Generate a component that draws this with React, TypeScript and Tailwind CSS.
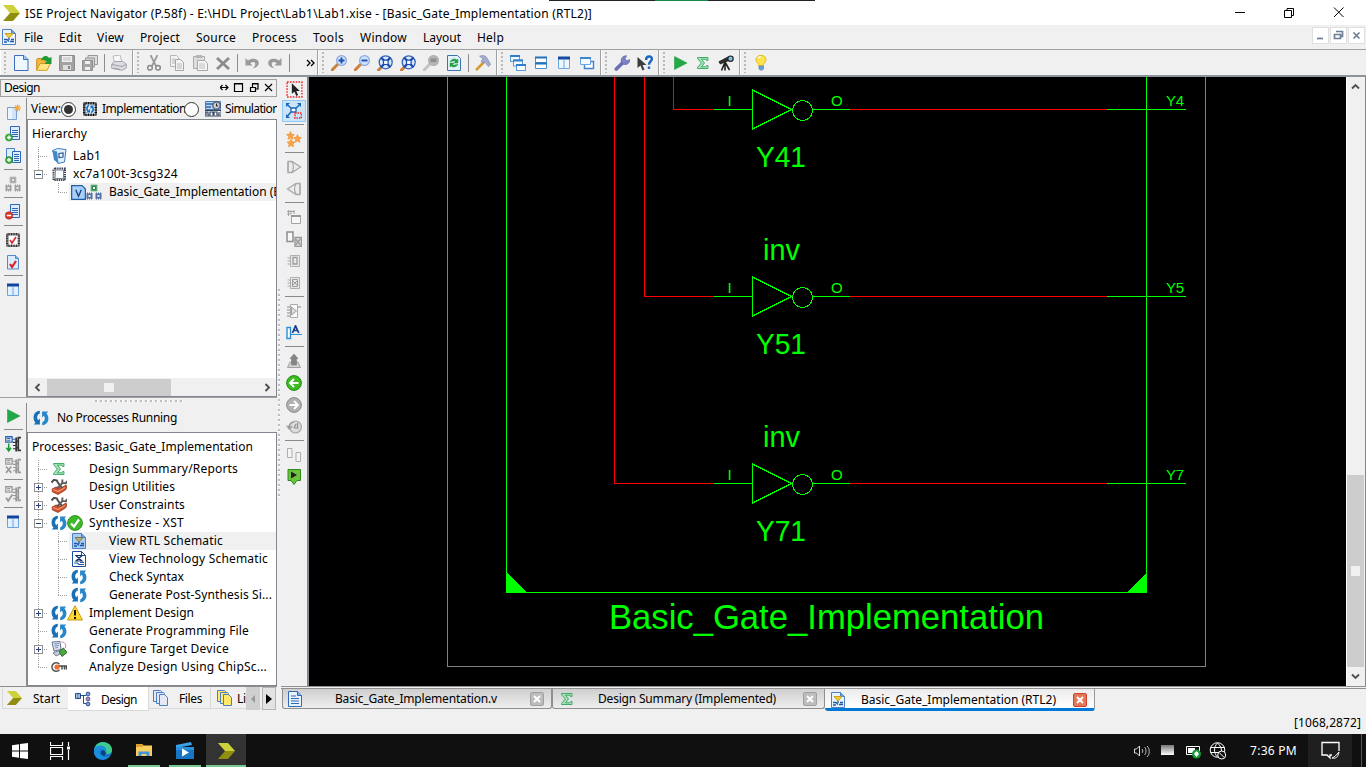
import React, { useLayoutEffect, useRef } from "react";

type P = { children?: React.ReactNode };

/* Text set to a given width by spreading or tightening its letters. */
function Label({ text, w, className = "" }: { text: string; w: number; className?: string }) {
  const ref = useRef<HTMLSpanElement>(null);
  useLayoutEffect(() => {
    const el = ref.current;
    if (!el) return;
    el.style.letterSpacing = "0px";
    const natural = el.getBoundingClientRect().width;
    el.style.letterSpacing = `${(w - natural) / text.length}px`;
  }, [text, w]);
  return (
    <span ref={ref} className={`inline-block shrink-0 whitespace-pre ${className}`}>
      {text}
    </span>
  );
}

function Ico({ children, s = 16 }: P & { s?: number }) {
  return (
    <svg width={s} height={s} viewBox="0 0 16 16" fill="none" className="shrink-0">
      {children}
    </svg>
  );
}

/* ---------- toolbar drawings ---------- */
const Logo = ({ s = 18 }: { s?: number }) => (
  <svg width={s} height={s} viewBox="0 0 18 18" className="shrink-0">
    <path d="M1 1h10l7 8H8z" fill="#cdd23c" />
    <path d="M8 9h10l-7 8H1z" fill="#8f8e10" />
  </svg>
);
const NewDoc = () => (
  <Ico><path d="M1.500.500h9.500l4 4v11H1.500z" fill="#eef6ff" stroke="#3c6fbf" /><path d="M10.500.500v4h4.500" fill="#9cc4f0" stroke="#3c6fbf" /></Ico>
);
const OpenFile = () => (
  <Ico>
    <path d="M.700 15V4.500l1-1h4l1 1.500h3v4" fill="#f3b73e" stroke="#c98a1e" />
    <path d="M.700 15.300L4 8.500h10.500L11 15.300z" fill="#ffe680" stroke="#d49b25" />
    <path d="M5 5.500C6 1 10.500-.5 13 3l2.500-1v7H8.500l2.300-2.300C9.500 4.500 7 4 5 5.500z" fill="#1d9a35" />
  </Ico>
);
const Save = () => (
  <Ico><path d="M.500.500h15v15h-15z" fill="#a2a2a2" stroke="#8c8c8c" /><path d="M3 1h10v6H3z" fill="#f2f2f2" /><path d="M4 3h8M4 5h8" stroke="#bbb" /><path d="M4 10h8v5H4z" fill="#ddd" /><path d="M9 11h2v3H9z" fill="#888" /></Ico>
);
const SaveAll = () => (
  <Ico>
    <path d="M6 .5h9.500v9H6z" fill="#ddd" stroke="#999" /><path d="M3.500 3h9v9h-9z" fill="#ccc" stroke="#999" />
    <path d="M.5 5.500h10v10H.5z" fill="#a5a5a5" stroke="#909090" /><path d="M3 6h5v3H3zM3 12h5v3H3z" fill="#eee" />
  </Ico>
);
const Print = () => (
  <Ico><path d="M3.500 8L2 1l7-1 2 7z" fill="#f7f7fa" stroke="#b8b8c2" /><path d="M.700 9l3-2.500h8l3.600 2.500v4l-4.300 2.300-10.300-2z" fill="#dcdce2" stroke="#a5a5af" /><path d="M1 9.500l10 2 4-2M3 13l6 1.500" stroke="#9d9da8" /></Ico>
);
const Cut = () => (
  <Ico><path d="M4.500 0l5.500 11M11.500 0L6 11" stroke="#989898" strokeWidth="1.700" /><circle cx="4" cy="12.800" r="2.300" stroke="#888" strokeWidth="1.500" /><circle cx="12" cy="12.800" r="2.300" stroke="#888" strokeWidth="1.500" /></Ico>
);
const Copy = () => (
  <Ico><path d="M1.500.5h6l2 2v9h-8z" fill="#f3f3f3" stroke="#b5b5b5" /><path d="M6.500 4.500h5l3 3v8h-8z" fill="#f3f3f3" stroke="#a5a5a5" /><path d="M3 4h3M3 6h3M3 8h3M8 9h5M8 11h5M8 13h5" stroke="#b8b8b8" /></Ico>
);
const Paste = () => (
  <Ico><path d="M1.500 1.500h11v12h-11z" fill="#dedede" stroke="#ababab" /><path d="M4 0h6v3H4z" fill="#b5b5b5" /><path d="M5.500 5.500h7l3 3v7h-10z" fill="#f5f5f5" stroke="#a8a8a8" /><path d="M7 9h6M7 11h6M7 13h6" stroke="#c0c0c0" /></Ico>
);
const Del = () => <Ico><path d="M2 3l12 11M14 3L2 14" stroke="#8b8b8b" strokeWidth="2.800" /></Ico>;
const Undo = () => <Ico><path d="M1.500 3v7.500h7L6.300 8.200c2.700-2 5-1.200 5 .8 0 1.500-1 3-3 4.500 4.500-.8 6.500-3 6.500-5.700C14.800 3.600 8 2.300 4 5.600z" fill="#9a9a9a" /></Ico>;
const Redo = () => <Ico><path d="M14.500 3v7.500h-7l2.200-2.300c-2.700-2-5-1.200-5 .8 0 1.500 1 3 3 4.500-4.500-.8-6.500-3-6.500-5.700C1.200 3.600 8 2.300 12 5.600z" fill="#9a9a9a" /></Ico>;

function Lens({ c = "#3c6fd0", fill = "#cfe2fb", handle = "#c98236", children }: P & { c?: string; fill?: string; handle?: string }) {
  return (
    <Ico>
      <path d="M1 15l5.500-5.500" stroke={handle} strokeWidth="3" strokeLinecap="round" />
      <circle cx="10.500" cy="5.500" r="4.900" fill={fill} stroke={c} strokeWidth="1.200" />
      {children}
    </Ico>
  );
}
const ZoomIn = () => <Lens c="#8fa9dc"><path d="M10.500 2.500v6M7.500 5.500h6" stroke="#1e4fb4" strokeWidth="1.900" /></Lens>;
const ZoomOut = () => <Lens c="#8fa9dc"><path d="M7.500 5.500h6" stroke="#1e4fb4" strokeWidth="1.900" /></Lens>;
const ZoomFit = () => (
  <Ico>
    <path d="M1.500 15l4-4" stroke="#c98236" strokeWidth="3" strokeLinecap="round" />
    <circle cx="8.700" cy="7.300" r="6.500" fill="#d9e8fb" stroke="#3563bd" strokeWidth="1.300" />
    <path d="M4 2.500l3 3M13.500 2.500l-3 3M13.500 12.300l-3-3M4 12.300l3-3" stroke="#1d4bab" strokeWidth="2.300" /><path d="M6.500 5.200h4.600v4.300H6.500z" fill="#f2f8ff" stroke="#1d4bab" strokeWidth="1.200" />
  </Ico>
);
const ZoomGray = () => <Lens c="#b0b0b0" fill="#b5b5b5" handle="#c4c4c4"><path d="M7.500 3.500h6v3.500h-6z" fill="#8f8f8f" /></Lens>;
const Refresh = () => (
  <Ico>
    <path d="M1.500.5h10l3 3v12h-13z" fill="#e3f1fb" stroke="#3676ad" />
    <path d="M4 7c1-3 5-4 7-2l1-1v4H8l1.500-1.500C8 5.500 6 6 4 7zM12 9c-1 3-5 4-7 2l-1 1V8h4L6.500 9.500C8 10.500 10 10 12 9z" fill="#25a045" stroke="#25a045" strokeWidth=".5" />
  </Ico>
);
const Hammer = () => <Ico><path d="M1 15.200l8-8.200" stroke="#d69a2e" strokeWidth="2.600" /><path d="M4.500 1.200c4-1.500 6.500-.2 7.500 1.800l3.700 6.500-2.200 2L10 7.300 7.300 8 6 6l2.200-2z" fill="#a3abcf" stroke="#7b84ad" strokeWidth=".6" /></Ico>;
const Cascade = () => (
  <Ico>{[[0, 0], [3, 4.5], [6, 9]].map(([x, y]) => (<g key={x}><rect x={x + 0.5} y={y + 0.5} width="9" height="6" fill="#f5faff" stroke="#5b9bd8" /><path d={`M${x} ${y + 1}h10`} stroke="#2f7fcc" strokeWidth="2" /></g>))}</Ico>
);
const TileH = () => <Ico><path d="M2.500 2.500h11v5h-11zM2.500 8.500h11v5h-11z" fill="#fff" stroke="#4a90d2" /><path d="M2 2.500h12M2 8.500h12" stroke="#2272be" strokeWidth="1.800" /></Ico>;
const TileV = () => <Ico><path d="M2.500 2.500h11v11h-11z" fill="#eef6ff" stroke="#6ca8df" /><path d="M2 3h12" stroke="#174a9c" strokeWidth="3" /><path d="M8 4v9" stroke="#6ca8df" /></Ico>;
const Float = () => <Ico><path d="M5.500 6.500h9v7h-9z" fill="#fff" stroke="#3d86cb" strokeWidth="1.400" /><path d="M1.500 2.500h10v7h-10z" fill="#f5faff" stroke="#6ca8df" /><path d="M1 3h11" stroke="#3d86cb" strokeWidth="2" /></Ico>;
const Wrench = () => <Ico><path d="M2.300 14l6.700-6.500" stroke="#6a6fb5" strokeWidth="3.600" strokeLinecap="round" /><path d="M7.500 7.500c-1.200-3.500 1-7 5-6.700l-1.500 3 2 2 2.700-1.300c.3 3.700-3 5.700-6 4.800z" fill="#7d82c6" stroke="#5c61a6" strokeWidth=".7" /></Ico>;
const WhatsThis = () => <Ico><path d="M.500 2v11l3-2.500 2 5 2-1-2-4.500h4z" fill="#3b3b3b" /><path d="M9 5C9 .2 15.800.5 14.700 4.700c-.5 1.800-2.700 2-2.700 5" stroke="#1a66c0" strokeWidth="2.400" /><path d="M10.800 11.500h2.400v2.400h-2.400z" fill="#1a66c0" /></Ico>;
const Play = () => <Ico><path d="M2.500 1.500v13L15 8z" fill="#22a845" stroke="#2c9b45" strokeWidth=".6" /></Ico>;
const Sigma = () => <Ico><path d="M2.500 2.500h10.500v3h-1.300l-.7-1.300H6.500L9.500 8l-3 3.800h4.300l.9-1.300H13v3H2.500v-1L6.300 8 2.500 3.500z" fill="#a3e3b8" stroke="#259c50" strokeWidth=".8" /></Ico>;
const Telescope = () => <Ico><path d="M.500 6.500l9.500-5 2 4-10 4z" fill="#2b2b2b" /><circle cx="12.500" cy="3.700" r="2.700" fill="#7cc3e8" stroke="#222" strokeWidth="1.200" /><path d="M7 7l-3.500 8.500M7 7v8.500M7 7l4.500 8" stroke="#222" strokeWidth="1.600" /></Ico>;
const Bulb = () => <Ico><path d="M8 .5c6 0 6 5.500 3 8-.6.7-.8 1.500-.8 2.500H5.800c0-1-.2-1.800-.8-2.500-3-2.500-3-8 3-8z" fill="#ffe34a" stroke="#e5b620" /><path d="M5 3c1-1 2-1.300 3-1" stroke="#fff" strokeWidth="1.300" /><path d="M6 11h4.500v3L8.200 15.500 6 14z" fill="#6aa2d8" stroke="#3f7ab5" strokeWidth=".6" /></Ico>;

/* ---------- side drawings ---------- */
const lines = "M7 4.500h6M7 6.500h6M7 8.500h6M7 10.500h6";
const NewSource = () => <Ico><path d="M2.500 3.500h9v12h-9z" fill="#cfe4fa" stroke="#7ba0d0" /><path d="M3 4h4v11H3z" fill="#eaf4ff" /><path d="M12.500.5v7M9 4h7M10 1.500l5 5M15 1.500l-5 5" stroke="#f0a93a" strokeWidth="1.100" /></Ico>;
const AddSource = () => <Ico><path d="M5.500.5h9v13h-9z" fill="#ddedff" stroke="#2d68b5" /><path d={lines} stroke="#2d68b5" /><circle cx="4" cy="11.500" r="3.500" fill="#3fae3a" stroke="#1f7f22" strokeWidth=".6" /><path d="M4 9.500v4M2 11.500h4" stroke="#fff" strokeWidth="1.300" /></Ico>;
const AddCopy = () => <Ico><path d="M1.500.5h8v12h-8z" fill="#ddedff" stroke="#4b83c8" /><path d="M7.500 3.500h8v11h-8z" fill="#ddedff" stroke="#2d68b5" /><path d="M9 6.500h5M9 8.500h5M9 10.500h5M9 12.500h5" stroke="#2d68b5" /><circle cx="4" cy="12" r="3.500" fill="#3fae3a" stroke="#1f7f22" strokeWidth=".6" /><path d="M4 10v4M2 12h4" stroke="#fff" strokeWidth="1.300" /></Ico>;
const RemoveDoc = () => <Ico><path d="M5.500.5h9v13h-9z" fill="#ddedff" stroke="#2d68b5" /><path d={lines} stroke="#2d68b5" /><circle cx="4" cy="11.500" r="3.700" fill="#e03a2c" stroke="#a3170e" strokeWidth=".6" /><path d="M1.800 11.500h4.400" stroke="#fff" strokeWidth="1.500" /></Ico>;
function Chips({ top, low }: { top: string; low: string }) {
  const chip = (x: number, y: number, c: string) => (
    <g key={`${x}-${y}`}>
      <path d={`M${x} ${y + 1.500}h7M${x} ${y + 3.500}h7M${x} ${y + 5.500}h7M${x + 1.500} ${y}v7M${x + 3.500} ${y}v7M${x + 5.500} ${y}v7`} stroke={c} />
      <rect x={x + 2} y={y + 2} width="3" height="3" fill="#e8f2ea" stroke={c} />
    </g>
  );
  return <Ico>{chip(4.5, 0.5, top)}{chip(0, 8.5, low)}{chip(9, 8.5, low)}</Ico>;
}
function Chip({ c = "#444", fill = "#fff", children }: P & { c?: string; fill?: string }) {
  return (
    <Ico>
      <path d="M4 1v14M6.500 1v14M9 1v14M11.500 1v14M1 4h14M1 6.500h14M1 9h14M1 11.500h14M2 2h12v12H2z" stroke={c} strokeWidth="1.200" />
      <rect x="3.500" y="3.500" width="9" height="9" fill={fill} />
      {children}
    </Ico>
  );
}
const ChipCheck = () => <Chip c="#333"><path d="M5 8l2 3 4-6" stroke="#dd2a2a" strokeWidth="1.600" /></Chip>;
const ChipPlain = () => (
  <Ico><path d="M4 2.500h10v11.500H2.500V4z" stroke="#39424f" strokeWidth="2" strokeDasharray="1.400 .8" /><path d="M4.500 4h8v8.500H4z" fill="#fafcff" stroke="#5a6574" strokeWidth=".8" /></Ico>
);
const ChipCycle = () => <Chip c="#101010" fill="#d6ebfc"><path d="M7 4.500C4.500 5 4.500 8.500 6 10M9 11.500c2.500-.8 2.800-4 1.200-6" stroke="#1c6fbd" strokeWidth="1.700" /><path d="M4 11.500h4v-3.500zM12 4.500H8.500V8z" fill="#1c6fbd" /></Chip>;
const DocCheck = () => <Ico><path d="M2.500 1.500h8l3 3v10.500h-11z" fill="#dcecff" stroke="#5389c9" /><path d="M10.500 1.500v3h3" fill="#87b3e6" stroke="#5389c9" /><path d="M5 10l2 3 4-6" stroke="#e0202a" strokeWidth="2.200" /></Ico>;
const Columns = () => <Ico><path d="M2.500 3h11v10.500h-11z" fill="#e3f0ff" stroke="#6ba3e0" /><path d="M2 3h12" stroke="#0f459c" strokeWidth="3" /><path d="M8 4.500v9" stroke="#6ba3e0" /></Ico>;
function ChipFlow({ c, mark, g }: { c: string; mark: "down" | "x" | "check"; g: string }) {
  return (
    <Ico s={17}>
      <path d="M.7.7h6v5h-6z" stroke={g} strokeWidth="1.200" /><path d="M2 2.300h3M2 4h3M7 3h3" stroke={g} />
      <path d="M10.500 1.500v13M15 1.500h-2.500v12H15M10 5h2M10 11h2" stroke={c} strokeWidth="1.600" /><path d="M7.500 6h3M7.500 9h3M7.500 12h3" stroke={c} />
      {mark === "down" && <path d="M3.500 7v6M1.300 11l2.200 3 2.200-3" stroke="#159b35" strokeWidth="1.400" />}
      {mark === "x" && <path d="M1 8l5 6M6 8l-5 6" stroke="#999" strokeWidth="1.500" />}
      {mark === "check" && <path d="M1 11l2 3 4-6" stroke="#999" strokeWidth="1.700" />}
    </Ico>
  );
}
const half = "M6.800.8C2.500 1 .3 4.500.6 8c.1 2 .8 3.500 1.900 4.600L.8 14.500h6.100V8.400L5.200 10.200C3.600 8.300 3.700 5 6.800 3.600z";
const Cycle = () => (
  <Ico><path d={half} fill="#1a70b4" /><path d={half} fill="#2787c9" transform="rotate(180 8 8)" /></Ico>
);
const Ok = () => <Ico><circle cx="8" cy="8" r="7.400" fill="#3fb929" stroke="#2b931a" /><path d="M4 8.500l3 3 5-7" stroke="#fff" strokeWidth="2.200" /></Ico>;
const Warn = () => <Ico><path d="M8 .8L15.500 15H.5z" fill="#ffd92e" stroke="#c29a16" /><path d="M8 5v5.500" stroke="#111" strokeWidth="2" /><path d="M7 12h2v2H7z" fill="#111" /></Ico>;
const Tools = () => (
  <Ico>
    <path d="M1 10l4-2 5 1 5-3 1 2-1.500 3L7 15.500 1.500 13z" fill="#d2512a" stroke="#8e2f14" strokeWidth=".7" /><path d="M2 10.500l5 2 7-4" stroke="#f0987a" strokeWidth="1.300" />
    <path d="M.5 3.500L3 .8l3 .7.5 1.500L11 9" stroke="#4e4e4e" strokeWidth="2" /><path d="M6 9.500l6-6M11.500.5l-.3 3.500 3.800.3 1-2.300" stroke="#5d5d5d" strokeWidth="1.900" />
  </Ico>
);
function Schematic({ gold = true, bg = "#e9f4ff" }: { gold?: boolean; bg?: string }) {
  return (
    <Ico><path d="M1.500.5h9l4 4v11h-13z" fill={bg} stroke="#4c80c4" /><path d="M10.500.5v4h4" fill="#6f9fd8" stroke="#4c80c4" /><path d="M4 4.500h8L8 9z" fill={gold ? "#f1cd3a" : "#b3b184"} stroke={gold ? "#c9a020" : "#77784e"} /><path d="M8 9v2M3 10.500h3l2 2M3 13h3M9 12.500h4M10 10.500h3" stroke="#2458a6" strokeWidth="1.300" /></Ico>
  );
}
const TechSchematic = () => (
  <Ico><path d="M1.500.5h9l4 4v11h-13z" fill="#fff" stroke="#1d4fa0" /><path d="M10.500.5v4h4" stroke="#1d4fa0" /><path d="M5 4.500h6L5 10h6L5 4.500z" fill="#fff" stroke="#12336f" strokeWidth="1.200" /><path d="M3 12h3.500l1.500 1.500h5M9 11.500h4" stroke="#2458a6" strokeWidth="1.200" /></Ico>
);
const Configure = () => <Ico><path d="M1 1l8-.5 1 8-7 1.500z" fill="#dfe6f2" stroke="#66738f" /><path d="M3 3l5-.5M3.500 5l4.500-.5M4 7l3-.5" stroke="#7990b8" /><path d="M2 12l6-2.500 3 2.500-6 3z" fill="#c4cbd8" stroke="#7684a0" /><path d="M8 10.500l4.500-3.500 3.500 4.500-5 4z" fill="#49a83e" stroke="#2c5e25" strokeWidth=".9" /><path d="M10.500 1c3 0 5 2 4 6" stroke="#d86f9a" /></Ico>;
const Probe = () => <Ico><path d="M8.500 5.200A4.300 4.300 0 1 0 8.500 10.800" stroke="#555" strokeWidth="1.500" /><circle cx="6" cy="8" r="2.600" fill="#ee6f35" /><path d="M8 7h8M11 7v3.500M13.500 7v3.500M15.500 7v3.500" stroke="#4c4c4c" strokeWidth="1.500" /></Ico>;
const ProjectIcon = () => <Ico><path d="M1.500 2.500l5-2 8.500 1L13.500 14 7 15.500z" fill="#e2f0fd" stroke="#3c7bb8" /><path d="M1.500 2.500l4.500 1 1.500 12L3 12z" fill="#3c88c9" /><path d="M8 5.500l4-.5v4l-4 .5z" fill="#fff" stroke="#27548d" strokeWidth="1.200" /></Ico>;
const VFile = () => <Ico s={15}><path d="M.700.700h11l3.600 3.600v11H.700z" fill="#a9d1f8" stroke="#1c5ca8" strokeWidth="1.300" /><path d="M5 5l3 7 3-7" stroke="#1a3f88" strokeWidth="1.400" /></Ico>;
const SimIcon = () => <Ico><path d="M.5.5h15v8H.5z" fill="#b6d2f0" stroke="#4a79b5" /><path d="M1 3h7M1 6h5" stroke="#2f68ac" strokeWidth="1.400" /><circle cx="11.500" cy="4.500" r="3.700" fill="#c7ccd2" stroke="#4c5560" strokeWidth="1.200" /><path d="M11.500 2.500V5H13" stroke="#222" /><path d="M0 9.500h16V15H0z" fill="#fff" stroke="#30435e" /><path d="M1 14v-3h2v3h2v-3h3v3h1v-3h3v3h2v-3" stroke="#30435e" strokeWidth="1.200" /></Ico>;

const Select = () => <Ico s={17}><path d="M1 1h14v14H1z" stroke="#e22" strokeWidth="1.300" strokeDasharray="1.500 1.200" /><path d="M5.500 2v10l2.500-2 1.700 4 1.700-.8-1.700-3.700h3.300z" fill="#222" /></Ico>;
const ZoomFull = () => <Ico><path d="M5 5h5v4H5z" fill="#fff" stroke="#1b66b8" strokeWidth="1.300" /><path d="M5 5L1.500 2M10 5l3.500-3M5 9l-3.500 4" stroke="#1b66b8" strokeWidth="1.500" /><path d="M0 0h4L0 4zM15 0h-4l4 4zM0 15h4l-4-4z" fill="#1b66b8" /><path d="M9 10h6.500v5H9z" stroke="#e22" strokeWidth="1.500" strokeDasharray="1.500 1" /></Ico>;
const star = "M0-4l1.200 2.600 2.800.4-2 2 .5 2.900L0 2.500l-2.500 1.400.5-2.900-2-2 2.800-.4z";
const Stars = () => <Ico><g fill="#f7a24a" stroke="#ec8a28" strokeWidth=".5"><path d={star} transform="translate(4.500 4.500)" /><path d={star} transform="translate(11.500 7.500)" /><path d={star} transform="translate(5 12)" /></g></Ico>;
const Cone = ({ flip = false }: { flip?: boolean }) => (
  <Ico><g transform={flip ? "translate(16 0) scale(-1 1)" : undefined}><path d="M2 2.500h4L14.500 8 6 13.500H2z" fill="#ececec" stroke="#a9a9a9" strokeWidth="1.300" /><path d="M6 3c1.800 3 1.800 7 0 10M2 3v10" stroke="#a9a9a9" strokeWidth="1.200" /></g></Ico>
);
const GWin = () => <Ico><path d="M5.500 6.500h9v8h-9z" fill="#f6f6f6" stroke="#a4a4a4" /><path d="M5 7h10" stroke="#999" strokeWidth="2" /><path d="M1 2.500h8M1 5h4M2.500 1v6M5 1v4M8 1v4" stroke="#a4a4a4" /></Ico>;
const GSwap = () => <Ico><path d="M1 1h6v9.500H1z" fill="#f7f7f7" stroke="#8e8e8e" strokeWidth="1.500" /><path d="M9 6.500h6.500v9H9z" fill="#ddd" stroke="#999" strokeWidth="1.300" /><path d="M9.500 8l5 6M14.500 8l-5 6" stroke="#999" strokeWidth="1.300" /></Ico>;
const GChip = ({ x = false }: { x?: boolean }) => <Ico><path d="M4.500 2.500h9v11h-9z" fill="#e8e8e8" stroke="#b0b0b0" /><path d="M1.500 5h3M1.500 8h3M1.500 11h3" stroke="#aaa" />{x ? <path d="M7 6l4 4M11 6l-4 4M6.500 4.500h5v7h-5z" stroke="#9c9c9c" /> : <path d="M7 4.500h4v6.500H7z" stroke="#9c9c9c" strokeWidth="1.300" />}</Ico>;
const GGate = () => <Ico><path d="M4.500 1.500h7v13h-7z" fill="#fafafa" stroke="#aaa" /><path d="M5.500 4v8L10.500 8z" fill="#ddd" stroke="#a0a0a0" /><path d="M1 4h3M1 7h3M1 10h3M1 13h3M12 4h3" stroke="#aaa" strokeWidth="1.300" /></Ico>;
const Rename = () => <Ico><path d="M1 2.500h3.500v11H1z" fill="#fff" stroke="#2a8fd4" strokeWidth="1.400" /><path d="M5 9.500h11" stroke="#2a8fd4" /><path d="M6.500 8L9.500.8 12.800 8M7.800 5.500h4" stroke="#1b3c90" strokeWidth="1.700" /></Ico>;
const Push = () => <Ico><path d="M1.500 14.500L4 9h8l2.500 5.500z" fill="#d2d2d2" stroke="#a2a2a2" /><path d="M8 1l4 4.500-1.500.5V12h-5V6L4 5.500z" fill="#858585" stroke="#777" strokeWidth=".5" /></Ico>;
const Nav = ({ dir }: { dir: "l" | "r" }) => (
  <Ico><circle cx="8" cy="8" r="7.400" fill={dir === "l" ? "#3dbb22" : "#b0b0b0"} stroke={dir === "l" ? "#218c12" : "#8c8c8c"} /><path d={dir === "l" ? "M12.500 8H4M8 4L4 8l4 4" : "M3.500 8H12M8 4l4 4-4 4"} stroke="#fff" strokeWidth="1.900" /></Ico>
);
const History = () => <Ico><circle cx="9.500" cy="8" r="5.900" fill="#dcdcdc" stroke="#aeaeae" strokeWidth="1.300" /><path d="M0 6.500l3 4.500 4-3.500z" fill="#9f9f9f" /><path d="M3 8c0-3 2-4.500 4.500-4.500M11.500 4v4.500M8 9h4.500M8 9l2-4" stroke="#939393" strokeWidth="1.200" /></Ico>;
const TwoBox = () => <Ico><path d="M1.500 1.500h4.500v9H1.500zM10 5.500h4.500v9H10z" fill="#f4f4f4" stroke="#adadad" /></Ico>;
const MarkGo = () => <Ico><path d="M2 .5h12.500v11H11l-3 4-3-4H2z" fill="#6cc43e" stroke="#2d8a1d" /><path d="M5 2.500l6 3.500-6 3.500z" fill="#222" /></Ico>;
const TextDoc = () => <Ico><path d="M1.500.5h9l4 4v11h-13z" fill="#e7f2ff" stroke="#3469b4" /><path d="M10.500.5v4h4" fill="#8bb2e2" stroke="#3469b4" /><path d="M4 5h5M4 7.500h8M4 10h8M4 12.500h8" stroke="#3469b4" strokeWidth="1.200" /></Ico>;
const HierTab = () => <Ico><path d="M.5 2.500h5v5h-5z" fill="#dcebfb" stroke="#234d8c" /><path d="M1.500 4h3M1.500 6h3M5.500 4.500H11M8.500 4.500v8H11" stroke="#234d8c" /><circle cx="13" cy="3" r="1.900" fill="#75a9df" stroke="#3d4f8c" /><circle cx="13" cy="8" r="1.900" fill="#b58fc9" stroke="#59518c" /><circle cx="13" cy="13" r="1.900" fill="#75a9df" stroke="#3d4f8c" /></Ico>;
const Pages = ({ f }: { f: string }) => <Ico><path d="M.5.5h7l1 1v10h-8z" fill={f} stroke="#4a7fc4" /><path d="M3.500 2.500h7l1 1v10h-8z" fill={f} stroke="#4a7fc4" /><path d="M6.500 4.500h5l3 3v8h-8z" fill={f} stroke="#4a7fc4" /></Ico>;

/* ---------- building blocks ---------- */
const Cell = ({ children }: P) => <div className="flex h-6 w-[23px] shrink-0 items-center justify-center">{children}</div>;
const VSep = () => <div className="mx-[2.5px] h-[18px] w-px shrink-0 bg-[#8c8c8c]" />;
function Group({ w, children }: P & { w: string }) {
  return (
    <div className={`flex h-[25px] shrink-0 items-center border-l border-l-white ${w}`}>
      <div className="mr-[3px] ml-[3px] h-[21px] w-[2px] shrink-0 bg-[repeating-linear-gradient(#b9b9b9_0_2px,transparent_2px_4px)]" />
      {children}
    </div>
  );
}
function Rail({ items, w }: { items: (React.ReactNode | null)[]; w: string }) {
  return (
    <div className={`flex flex-col items-center ${w}`}>
      {items.map((it, i) =>
        it === null ? (
          <div key={i} className="flex h-[6px] w-full shrink-0 justify-center pt-[2px]"><div className="h-px w-[19px] bg-[#8a8a8a]" /></div>
        ) : (
          <div key={i} className="flex h-[22px] w-full shrink-0 items-center justify-center">{it}</div>
        )
      )}
    </div>
  );
}

type RowT = { lvl: 1 | 2; exp?: "+" | "-"; icon: React.ReactNode; text: string; w: number; sel?: boolean; tx: string; last?: boolean; alone?: boolean; end?: boolean };
const dotV = "bg-[repeating-linear-gradient(#a0a0a0_0_1px,transparent_1px_2px)]";
const dotH = "bg-[repeating-linear-gradient(90deg,#a0a0a0_0_1px,transparent_1px_2px)]";
function TreeRow({ r }: { r: RowT }) {
  return (
    <div className="flex h-[18px] w-full shrink-0 overflow-hidden">
      <div className="flex h-[18px] w-[20px] shrink-0 justify-end">
        <div className="relative h-[18px] w-[10px]">
          {!r.alone && <div className={`absolute top-0 left-0 w-px ${dotV} ${r.last ? "h-[9px]" : "h-[18px]"}`} />}
          {r.lvl === 1 && <div className={`absolute top-[9px] left-0 h-px w-[10px] ${dotH}`} />}
          {r.exp && (
            <div className="absolute top-[5px] left-[-4px] flex h-[9px] w-[9px] items-center justify-center border border-[#919191] bg-white">
              <div className="absolute h-px w-[5px] bg-[#24407a]" />
              {r.exp === "+" && <div className="absolute h-[5px] w-px bg-[#24407a]" />}
            </div>
          )}
        </div>
      </div>
      {r.lvl === 2 && (
        <div className="relative ml-[10px] h-[18px] w-[11px] shrink-0">
          <div className={`absolute top-0 left-0 w-px ${dotV} ${r.end ? "h-[9px]" : "h-[18px]"}`} />
          <div className={`absolute top-[9px] left-0 h-px w-[10px] ${dotH}`} />
        </div>
      )}
      <div className={`flex h-[18px] flex-1 items-center ${r.sel ? "bg-[#f0f0f0]" : ""}`}>
        <div className={`flex shrink-0 items-center pl-[3px] ${r.tx}`}>{r.icon}</div>
        <Label text={r.text} w={r.w} />
      </div>
    </div>
  );
}

const procs: RowT[] = [
  { lvl: 1, icon: <Sigma />, text: "Design Summary/Reports", w: 149, tx: "w-[41px]" },
  { lvl: 1, exp: "+", icon: <Tools />, text: "Design Utilities", w: 86, tx: "w-[41px]" },
  { lvl: 1, exp: "+", icon: <Tools />, text: "User Constraints", w: 96, tx: "w-[41px]" },
  { lvl: 1, exp: "-", icon: <><Cycle /><Ok /></>, text: "Synthesize - XST", w: 95, tx: "w-[41px]" },
  { lvl: 2, icon: <Schematic gold={false} bg="#a9cdf2" />, text: "View RTL Schematic", w: 114, sel: true, tx: "w-[40px] -ml-px pl-[2px] mr-px" },
  { lvl: 2, icon: <TechSchematic />, text: "View Technology Schematic", w: 159, tx: "w-[40px] -ml-px mr-px" },
  { lvl: 2, icon: <Cycle />, text: "Check Syntax", w: 75, tx: "w-[40px] -ml-px mr-px" },
  { lvl: 2, icon: <Cycle />, text: "Generate Post-Synthesis Si...", w: 163, tx: "w-[40px] -ml-px mr-px", end: true },
  { lvl: 1, exp: "+", icon: <><Cycle /><Warn /></>, text: "Implement Design", w: 105, tx: "w-[41px]" },
  { lvl: 1, icon: <Cycle />, text: "Generate Programming File", w: 160, tx: "w-[41px]" },
  { lvl: 1, exp: "+", icon: <Configure />, text: "Configure Target Device", w: 140, tx: "w-[41px]" },
  { lvl: 1, icon: <Probe />, text: "Analyze Design Using ChipSc...", w: 178, tx: "w-[41px]", last: true },
];
const hier: RowT[] = [
  { lvl: 1, icon: <ProjectIcon />, text: "Lab1", w: 28, tx: "w-[25px]" },
  { lvl: 1, exp: "-", icon: <ChipPlain />, text: "xc7a100t-3csg324", w: 105, tx: "w-[25px]", last: true },
  { lvl: 2, icon: <><VFile /><Chips top="#2a8c4a" low="#5470a8" /></>, text: "Basic_Gate_Implementation (E", w: 171, sel: true, alone: true, end: true, tx: "w-[40px] -ml-px mr-px" },
];

const Radio = ({ on = false }: { on?: boolean }) => (
  <div className="flex h-[15px] w-[15px] shrink-0 items-center justify-center rounded-full border border-[#333] bg-white">
    {on && <div className="h-[9px] w-[9px] rounded-full bg-[#333]" />}
  </div>
);

const G = "#00ff00";
function Gate({ y, name, port, x, inv = true }: { y: number; name: string; port: string; x: number; inv?: boolean }) {
  const m = y + 0.5;
  return (
    <g>
      <path d={`M${x + 0.5} 77V${m}H714`} stroke="#ff0000" />
      <path d={`M850 ${m}H1107`} stroke="#ff0000" />
      <path d={`M714 ${m}h38M812 ${m}h38M1107 ${m}h79`} stroke={G} />
      <path d={`M752.500 ${y - 19}v39L791.500 ${m}z`} stroke={G} />
      <circle cx="802.500" cy={y + 1.5} r="10" stroke={G} />
      <g fill={G} stroke="none">
        <text x="727.500" y={y - 3} fontSize="15">I</text>
        <text x="831" y={y - 3} fontSize="15">O</text>
        <text x="1166" y={y - 3} fontSize="15" textLength="18">{port}</text>
        {inv && <text x="763" y={y - 36} fontSize="30" textLength="37" lengthAdjust="spacingAndGlyphs">inv</text>}
        <text x="756" y={y + 57.5} fontSize="30" textLength="50" lengthAdjust="spacingAndGlyphs">{name}</text>
      </g>
    </g>
  );
}

function DocTab({ icon, text, w, cls, pad, active = false }: { icon: React.ReactNode; text: string; w: number; cls: string; pad: string; active?: boolean }) {
  return (
    <div className={`flex shrink-0 items-center rounded-b-[3px] ${cls} ${active ? "h-[22px] border-r border-b-[3px] border-r-[#999] border-b-[#0078d7] bg-gradient-to-b from-[#ececec] to-white pt-[2px]" : "h-[20px] border-r border-b border-l border-[#8f8f8f] bg-gradient-to-b from-[#cfcfcf] to-[#eee]"}`}>
      <div className={`flex shrink-0 ${pad}`}>{icon}</div>
      <Label text={text} w={w} />
      <div className={`mr-[7px] ml-auto flex h-[14px] w-[14px] shrink-0 items-center justify-center rounded-[2px] border ${active ? "border-[#d5402b] bg-[#e0795a]" : "border-[#a0a0a0] bg-[#bdbdbd]"}`}>
        <svg width="8" height="8" viewBox="0 0 8 8"><path d="M1 1l6 6M7 1L1 7" stroke="#fff" strokeWidth="2" /></svg>
      </div>
    </div>
  );
}

const menus: [string, number, string][] = [
  ["File", 19, "mr-[16px]"], ["Edit", 23, "mr-[15px]"], ["View", 27, "mr-[16px]"], ["Project", 40, "mr-[16px]"],
  ["Source", 40, "mr-[16px]"], ["Process", 45, "mr-[16px]"], ["Tools", 31, "mr-[16px]"], ["Window", 47, "mr-[16px]"],
  ["Layout", 38, "mr-[16px]"], ["Help", 27, ""],
];

export default function App() {
  return (
    <div className="flex h-[767px] w-[1366px] flex-col overflow-hidden bg-[#f0f0f0] text-[12px] leading-[18px] text-black [font-family:'Noto_Sans',sans-serif]">
      {/* title bar */}
      <div className="relative flex h-[25px] shrink-0 items-center bg-white pl-[2px]">
        <div className="absolute top-0 left-[549px] flex h-px w-[266px] bg-[#222]"><div className="ml-[106px] h-px w-[53px] bg-[#178a48]" /></div>
        <Logo />
        <Label className="ml-[5px] pt-[2px]" text={"ISE Project Navigator (P.58f) - E:\\HDL Project\\Lab1\\Lab1.xise - [Basic_Gate_Implementation (RTL2)]"} w={567} />
        <svg className="mr-[20px] mb-[2px] ml-auto" width="112" height="12" viewBox="0 0 112 12" fill="none" stroke="#000">
          <path d="M1 6.500h10M50.500 4.500h7v7h-7zM53 4V2.500h6.500v7H58M100 1.500l9.500 9.500M109.500 1.500L100 11" />
        </svg>
      </div>

      {/* menu bar */}
      <div className="flex h-[24px] shrink-0 items-center pl-px">
        <Schematic />
        <div className="ml-[7px] flex items-center pt-[2px]">
          {menus.map(([t, w, m]) => <Label key={t} text={t} w={w} className={m} />)}
        </div>
        <div className="mr-px mb-[3px] ml-auto flex gap-px">
          {["M5 11.500h6", "M6.500 4.500h6v5h-2M4.500 7.500h6v4h-6zM4 7.500h7M6 4.500h7", "M5.500 5.500l6 6M11.500 5.500l-6 6"].map((d) => (
            <div key={d} className="h-[17px] w-[17px] border border-[#e0e0e0] bg-white"><svg width="16" height="16" viewBox="1 1 16 16" fill="none"><path d={d} stroke="#6f7f93" strokeWidth="1.700" /></svg></div>
          ))}
        </div>
      </div>

      {/* tool bars */}
      <div className="flex h-[28px] shrink-0 border-t border-b-2 border-t-[#a0a0a0] border-b-[#8d929b] [&>div:not(:last-child)]:border-r [&>div:not(:last-child)]:border-r-[#a0a0a0]">
        <Group w="w-[133px]"><Cell><NewDoc /></Cell><Cell><OpenFile /></Cell><Cell><Save /></Cell><Cell><SaveAll /></Cell><VSep /><Cell><Print /></Cell></Group>
        <Group w="w-[185px]"><Cell><Cut /></Cell><Cell><Copy /></Cell><Cell><Paste /></Cell><Cell><Del /></Cell><VSep /><Cell><Undo /></Cell><Cell><Redo /></Cell><VSep />
          <svg className="ml-[14px]" width="9" height="8" viewBox="0 0 9 8" fill="none"><path d="M1 1l3 3-3 3M5 1l3 3-3 3" stroke="#000" strokeWidth="1.300" /></svg></Group>
        <Group w="w-[179px]"><Cell><ZoomIn /></Cell><Cell><ZoomOut /></Cell><Cell><ZoomFit /></Cell><Cell><ZoomFit /></Cell><Cell><ZoomGray /></Cell><Cell><Refresh /></Cell><VSep /><Cell><Hammer /></Cell></Group>
        <Group w="w-[104px]"><Cell><Cascade /></Cell><Cell><TileH /></Cell><Cell><TileV /></Cell><Cell><Float /></Cell></Group>
        <Group w="w-[58px]"><Cell><Wrench /></Cell><Cell><WhatsThis /></Cell></Group>
        <Group w="w-[81px]"><Cell><Play /></Cell><Cell><Sigma /></Cell><Cell><Telescope /></Cell></Group>
        <Group w="w-[600px]"><Cell><Bulb /></Cell></Group>
      </div>

      {/* work area */}
      <div className="flex h-[634px] shrink-0">
        {/* left dock */}
        <div className="flex w-[277px] shrink-0 flex-col">
          <div className="mt-[2px] flex h-[18px] shrink-0 items-center border border-[#a0a0a0] pl-[3px]">
            <Label text="Design" w={36} />
            <svg className="mr-[3px] mb-[2px] ml-auto" width="53" height="11" viewBox="0 0 53 11" fill="none" stroke="#000">
              <path d="M0 5.500h8M2.500 3L0 5.500 2.500 8M5.500 3L8 5.500 5.500 8M14.500 1.500h8v8h-8M14.500 1v9M14 2h9M30.500 5.500h5v4h-5zM32.500 5V1.500h5.500v5.500H36M32 2h6M45 2l7 7M52 2l-7 7" strokeWidth="1.200" />
            </svg>
          </div>
          <div className="mt-px flex h-[300px] shrink-0 border-b border-[#a0a0a0]">
            <Rail w="w-[26px] pt-[3px]" items={[<NewSource />, <AddSource />, <AddCopy />, null, <Chips top="#a0a0a0" low="#a0a0a0" />, null, <RemoveDoc />, null, <ChipCheck />, <DocCheck />, null, <Columns />]} />
            <div className="flex w-[251px] flex-col border-l border-[#8c8c8c]">
              <div className="flex h-[21px] shrink-0 items-center overflow-hidden pt-px pl-[4px]">
                <Label text="View:" w={30} />
                <Radio on />
                <div className="ml-[6px] flex"><ChipCycle /></div>
                <Label className="ml-[4px]" text="Implementation" w={84} />
                <div className="-ml-[2px] flex"><Radio /></div>
                <div className="ml-[6px] flex"><SimIcon /></div>
                <Label className="ml-[4px]" text="Simulation" w={54} />
              </div>
              <div className="flex flex-1 flex-col overflow-hidden border border-[#828790] bg-white">
                <div className="flex h-[27px] shrink-0 items-center pt-px pl-[4px]"><Label text="Hierarchy" w={55} /></div>
                {hier.map((r) => <TreeRow key={r.text} r={r} />)}
                <div className="mt-auto flex h-[18px] shrink-0 items-center bg-[#f0f0f0]">
                  <svg className="mx-[6px]" width="7" height="9" viewBox="0 0 7 9" fill="none"><path d="M5.500 1L2 4.500 5.500 8" stroke="#505050" strokeWidth="1.900" /></svg>
                  <div className="flex h-[17px] w-[124px] items-center justify-center bg-[#cdcdcd]"><div className="h-[9px] w-[10px] bg-[#f0f0f0]" /></div>
                  <svg className="mr-[5px] ml-auto" width="7" height="9" viewBox="0 0 7 9" fill="none"><path d="M1.500 1L5 4.500 1.500 8" stroke="#505050" strokeWidth="1.900" /></svg>
                </div>
              </div>
            </div>
          </div>
          <div className="flex h-[5px] shrink-0 items-center justify-center"><div className="h-[2px] w-[88px] bg-[repeating-linear-gradient(90deg,#bdbdbd_0_2px,#fff_2px_3px,transparent_3px_5px)]" /></div>
          <div className="flex h-[284px] shrink-0 border-b border-[#8c8c8c]">
            <Rail w="w-[26px] pt-[2px]" items={[<Play />, null, <ChipFlow c="#333" g="#2b62ae" mark="down" />, <ChipFlow c="#999" g="#999" mark="x" />, null, <ChipFlow c="#999" g="#999" mark="check" />, null, <Columns />]} />
            <div className="flex w-[251px] flex-col border-l border-[#8c8c8c]">
              <div className="flex h-[29px] shrink-0 items-center pl-[6px]"><Cycle /><Label className="ml-[8px]" text="No Processes Running" w={120} /></div>
              <div className="flex flex-1 flex-col overflow-hidden border border-[#828790] bg-white">
                <div className="flex h-[27px] shrink-0 items-center pt-px pl-[4px]"><Label text="Processes: Basic_Gate_Implementation" w={221} /></div>
                {procs.map((r) => <TreeRow key={r.text} r={r} />)}
              </div>
            </div>
          </div>
          <div className="flex h-[24px] shrink-0 items-start pl-[2px]">
            <div className="flex h-[22px] w-[66px] shrink-0 items-center border-b border-l border-[#d9d9d9] pl-[3px]"><Logo s={16} /><Label className="ml-[11px] pt-[2px]" text="Start" w={27} /></div>
            <div className="flex h-[24px] w-[81px] shrink-0 items-center border-r border-b border-[#d9d9d9] bg-white pl-[7px]"><HierTab /><Label className="ml-[10px] pt-[2px]" text="Design" w={36} /></div>
            <div className="flex h-[22px] w-[62px] shrink-0 items-center border-r border-b border-[#d9d9d9] pl-[4px]"><Pages f="#e6e8f6" /><Label className="ml-[10px] pt-[2px]" text="Files" w={23} /></div>
            <div className="flex h-[22px] w-[35px] shrink-0 items-center overflow-hidden border-b border-[#d9d9d9] pl-[6px]"><Pages f="#ffe96b" /><Label className="ml-[4px] pt-[2px]" text="Li" w={9} /></div>
            <div className="flex h-[23px] w-[14px] shrink-0 items-center justify-center bg-[#cfcfcf]"><svg width="6" height="8" viewBox="0 0 6 8"><path d="M5 0v8L1 4z" fill="#999" /></svg></div>
            <div className="h-[22px] w-[2px] overflow-hidden border-b border-[#d9d9d9]" />
            <div className="flex h-[23px] w-[14px] shrink-0 items-center justify-center border border-[#b5b5b5] bg-[#e3e3e3]"><svg width="6" height="10" viewBox="0 0 6 10"><path d="M0 0v10l6-5z" fill="#000" /></svg></div>
          </div>
        </div>

        {/* dock divider */}
        <div className="flex h-[609px] w-[4px] shrink-0 items-center justify-center bg-[#f0f0f0] pt-[25px]"><div className="h-[210px] w-[2px] bg-[repeating-linear-gradient(#bdbdbd_0_2px,#fff_2px_3px,transparent_3px_5px)]" /></div>

        {/* document area */}
        <div className="flex w-[1085px] shrink-0 flex-col">
          <div className="flex h-[609px] shrink-0">
            <Rail w="w-[26px] pt-px" items={[
              <Select />,
              <div className="flex h-[22px] w-[24px] items-center justify-center border border-[#90c8f6] bg-[#cce4f7]"><ZoomFull /></div>,
              null, <Stars />, null, <Cone />, <Cone flip />, null, <GWin />, <GSwap />, <GChip />, <GChip x />, null, <GGate />, <Rename />, null,
              <Push />, <Nav dir="l" />, <Nav dir="r" />, <History />, null, <TwoBox />, <MarkGo />]} />
            <div className="flex w-[1059px] border-r border-l-2 border-[#828790] bg-black">
              <svg width="1037" height="609" viewBox="309 77 1037 609" fill="none" shapeRendering="crispEdges" className="shrink-0 [font-family:'Liberation_Sans',Arial,sans-serif]">
                <path d="M447.500 77V666.500H1205.500V77" stroke="#808080" />
                <Gate y={109} name="Y41" port="Y4" x={673} inv={false} />
                <Gate y={296} name="Y51" port="Y5" x={644} />
                <Gate y={483} name="Y71" port="Y7" x={614} />
                <path d="M506.500 77V592.500H1146.500V77" stroke={G} />
                <path d="M506 572v21h21zM1147 572v21h-21z" fill={G} />
                <text x="609" y="629" fontSize="35" fill={G} textLength="435" lengthAdjust="spacingAndGlyphs">Basic_Gate_Implementation</text>
              </svg>
              <div className="flex w-[19px] shrink-0 flex-col items-center border-l border-white bg-[#f0f0f0] pr-px">
                <svg className="mt-[6px]" width="9" height="7" viewBox="0 0 9 7" fill="none"><path d="M1 5.500L4.500 2 8 5.500" stroke="#505050" strokeWidth="1.900" /></svg>
                <div className="mt-[385px] flex h-[192px] w-[17px] items-center justify-center bg-[#cdcdcd]"><div className="h-[10px] w-[9px] bg-[#f0f0f0]" /></div>
                <svg className="mt-[6px]" width="9" height="7" viewBox="0 0 9 7" fill="none"><path d="M1 1.500L4.500 5 8 1.500" stroke="#505050" strokeWidth="1.900" /></svg>
              </div>
            </div>
          </div>
          <div className="h-[3px] shrink-0 border-t border-b border-[#8f8f8f] bg-[#f0f0f0]" />
          <div className="flex h-[22px] shrink-0 items-start">
            <DocTab cls="w-[270px] ml-px pl-[4px]" pad="w-[48px]" icon={<TextDoc />} text="Basic_Gate_Implementation.v" w={162} />
            <DocTab cls="w-[273px] pl-[6px]" pad="w-[39px]" icon={<Sigma />} text="Design Summary (Implemented)" w={178} />
            <DocTab active cls="w-[270px] pl-[5px]" pad="w-[31px]" icon={<Schematic />} text="Basic_Gate_Implementation (RTL2)" w={195} />
          </div>
        </div>
      </div>

      {/* status bar */}
      <div className="flex h-[23px] shrink-0 items-center justify-end pt-px pr-[5px]"><Label text="[1068,2872]" w={67} /></div>

      {/* task bar */}
      <div className="flex h-[33px] shrink-0 items-stretch bg-[#101010] text-white">
        <div className="flex w-[40px] items-center justify-center"><svg width="16" height="16" viewBox="0 0 16 16"><path d="M0 2.200L7 1.200v6.300H0zM8 1l8-1v7.500H8zM0 8.500h7v6.300l-7-1zM8 8.500h8V16l-8-1z" fill="#fff" /></svg></div>
        <div className="flex w-[40px] items-center justify-center"><svg width="20" height="20" viewBox="0 0 20 20" fill="none"><path d="M.5 1v3.500h12V1M.5 19v-3.500h12V19M.5 6.500h12v7H.5zM18.500 1v4M18.500 9v10" stroke="#fff" strokeWidth="1.200" /><path d="M17 5.500h3v3h-3z" fill="#fff" /></svg></div>
        <div className="flex w-[46px] items-center justify-center"><svg width="18" height="18" viewBox="0 0 18 18"><circle cx="9" cy="9" r="9" fill="#1577c8" /><path d="M.3 7C1.500 2 5 0 9 0c6 0 9.300 4.500 9 8.500-.3 3-3.500 4-6 3 1-1.500 0-5-4-5-4 0-6 2-7.700.5z" fill="#3ccb8d" /><path d="M.3 7C2 3 6 3 9 4c3 1 4 4 2.500 6.500C10 7 7 6 5.500 9 5 13 9 15.500 14 15c-6 6-16 1-13.700-8z" fill="#1a8fe0" /><path d="M11.500 10.500c-.8-2-2.500-2.500-4-1.500-1.500 2 0 4.500 3 5.200z" fill="#0d3f78" /></svg></div>
        <div className="flex w-[36px] flex-col items-center justify-between pt-[9px]"><svg width="16" height="14" viewBox="0 0 16 14"><path d="M0 1h6l1.500 1.500H16V13H0z" fill="#f9ce5c" /><path d="M0 1h6l1.500 1.500L6 4H0z" fill="#e0a02c" /><path d="M2.500 13V8.500h11V13h-3v-2h-5v2z" fill="#3f93e0" /></svg><div className="h-[2px] w-[32px] bg-[#76c893]" /></div>
        <div className="flex w-[46px] flex-col items-center justify-between pt-[8px]"><svg width="18" height="17" viewBox="0 0 18 17"><path d="M0 3l15-3 1 3L0 6z" fill="#3ba2e6" /><path d="M0 5h18v12H0z" fill="#1775c4" /><path d="M0 5h18v3H0z" fill="#2a91dc" /><path d="M6 6.500v8l7-4z" fill="#fff" /></svg><div className="h-[2px] w-[32px] bg-[#76c893]" /></div>
        <div className="ml-[-2px] flex w-[40px] flex-col items-center justify-between bg-[#333] pt-[8px]"><Logo s={18} /><div className="h-[2px] w-[40px] bg-[#76c893]" /></div>
        <div className="ml-auto flex items-center">
          <svg width="92" height="18" viewBox="0 0 92 18" fill="none">
            <path d="M.5 7h2l3-3v10l-3-3h-2z" stroke="#ddd" /><path d="M8 7c1 1 1 3 0 4M10.500 5c2 2 2 6 0 8M13 4c3 3 3 8 0 11" stroke="#bbb" />
            <defs><linearGradient id="fl" x1="0" x2="0" y1="0" y2="1"><stop offset="0" stopColor="#777" /><stop offset="1" stopColor="#fff" /></linearGradient></defs>
            <path d="M27 3h13v10H27z" fill="url(#fl)" />
            <path d="M52.500 4.500h13v8h-13z" stroke="#fff" /><path d="M54 6h7v5h-7z" fill="#fff" /><circle cx="62.500" cy="12" r="4.500" fill="#159a3a" /><path d="M62.500 9.500c3 2 2 4 0 4.500-2-.5-3-2.500 0-4.500zM62.500 12v3" fill="#fff" stroke="#fff" strokeWidth=".6" />
            <circle cx="83.500" cy="8" r="7.300" stroke="#fff" /><path d="M83.500 1c-4 4-4 10 0 14M83.500 1c3 3 4 5 4 8M76.500 5.500h14M76.500 10.500h8" stroke="#fff" /><circle cx="87.700" cy="13" r="4" fill="#101010" stroke="#fff" /><path d="M85.200 10.500l5 5" stroke="#fff" />
          </svg>
          <Label className="mr-[11px] ml-[24px]" text="7:36 PM" w={47} />
        </div>
        <div className="flex w-[44px] items-center justify-center bg-[#1f1f1f]"><svg width="19" height="19" viewBox="0 0 19 19" fill="none"><path d="M18 10V1.500H1V14h5l3 3v-3h2" stroke="#fff" strokeWidth="1.300" /><path d="M18 11c-1 5-3 7-7 6 3-1 4-3 7-6z" stroke="#fff" /></svg></div>
        <div className="w-[14px] pl-[9px]"><div className="h-full w-px bg-[#555]" /></div>
      </div>
    </div>
  );
}
